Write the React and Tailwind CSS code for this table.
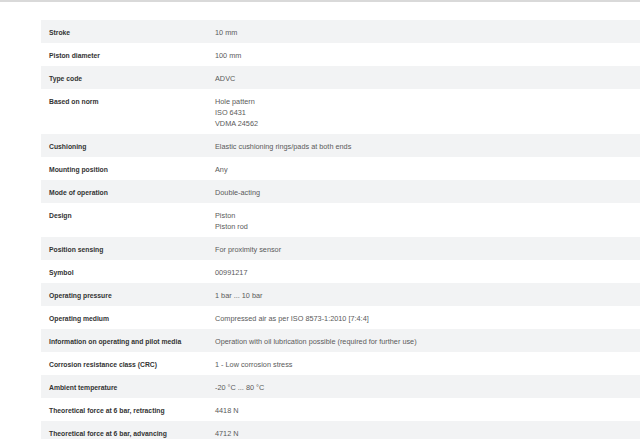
import React from "react";

const rows = [
  ["Stroke", ["10 mm"]],
  ["Piston diameter", ["100 mm"]],
  ["Type code", ["ADVC"]],
  ["Based on norm", ["Hole pattern", "ISO 6431", "VDMA 24562"]],
  ["Cushioning", ["Elastic cushioning rings/pads at both ends"]],
  ["Mounting position", ["Any"]],
  ["Mode of operation", ["Double-acting"]],
  ["Design", ["Piston", "Piston rod"]],
  ["Position sensing", ["For proximity sensor"]],
  ["Symbol", ["00991217"]],
  ["Operating pressure", ["1 bar ... 10 bar"]],
  ["Operating medium", ["Compressed air as per ISO 8573-1:2010 [7:4:4]"]],
  [
    "Information on operating and pilot media",
    ["Operation with oil lubrication possible (required for further use)"],
  ],
  ["Corrosion resistance class (CRC)", ["1 - Low corrosion stress"]],
  ["Ambient temperature", ["-20 °C ... 80 °C"]],
  ["Theoretical force at 6 bar, retracting", ["4418 N"]],
  ["Theoretical force at 6 bar, advancing", ["4712 N"]],
];

export default function App() {
  return (
    <div className="w-[640px] h-[439px] overflow-hidden bg-white font-['Liberation_Sans',Arial,sans-serif]">
      <div className="h-[2px] bg-[#d9d9d9]" />

      <div className="pl-[41px] pt-[18px]">
        {rows.map(([label, values], i) => (
          <div
            key={label}
            className={`flex pt-[7px] pb-[5px] leading-[11px] ${
              i % 2 === 0 ? "bg-[#f2f3f4]" : "bg-white"
            }`}
          >
            <div className="w-[174px] pl-[8px] text-[6.8px] font-bold text-[#333]">
              {label}
            </div>

            <div className="flex-1 text-[7.3px] text-[#5a5a5a]">
              {values.map((v) => (
                <div key={v}>{v}</div>
              ))}
            </div>
          </div>
        ))}
      </div>
    </div>
  );
}
